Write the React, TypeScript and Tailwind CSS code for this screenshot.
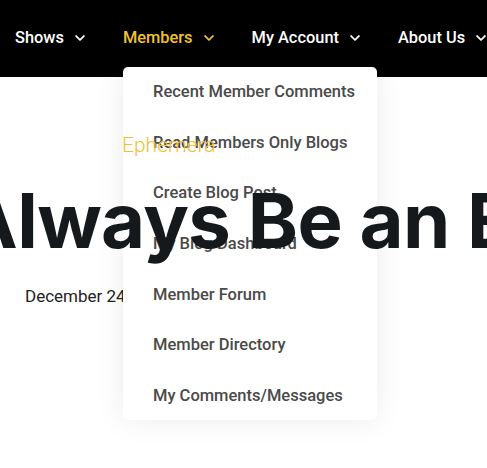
import React from "react";

const Chevron = ({ className }: { className?: string }) => (
  <svg viewBox="0 0 448 512" className={className} fill="currentColor">
    <path d="M207.029 381.476L12.686 187.132c-9.373-9.373-9.373-24.569 0-33.941l22.667-22.667c9.357-9.357 24.522-9.375 33.901-.04L224 284.505l154.745-154.021c9.379-9.335 24.544-9.317 33.901.04l22.667 22.667c9.373 9.373 9.373 24.569 0 33.941L240.971 381.476c-9.373 9.372-24.569 9.372-33.942 0z" />
  </svg>
);

const navItems = [
  { label: "Shows", active: false },
  { label: "Members", active: true },
  { label: "My Account", active: false },
  { label: "About Us", active: false },
];

const menu = [
  "Recent Member Comments",
  "Read Members Only Blogs",
  "Create Blog Post",
  "My Blog Dashboard",
  "Member Forum",
  "Member Directory",
  "My Comments/Messages",
];

export default function App() {
  return (
    <div
      className="relative w-[487px] h-[468px] overflow-hidden bg-white"
      style={{ fontFamily: "Roboto, 'Liberation Sans', sans-serif" }}
    >
      <nav className="h-[77px] bg-black flex items-center pl-[15px] gap-[38px] whitespace-nowrap">
        {navItems.map((n) => (
          <div
            key={n.label}
            className={`flex items-center gap-[11px] text-[16.4px] font-medium ${
              n.active ? "text-[#f2c12e]" : "text-white"
            }`}
          >
            <span>{n.label}</span>
            <Chevron className="w-[10px] h-[12px]" />
          </div>
        ))}
      </nav>

      <div className="absolute left-[123px] top-[67px] w-[254px] h-[353px] z-10 bg-white rounded-[5px] shadow-[0_0_30px_rgba(0,0,0,0.08)] flex flex-col">
        {menu.map((m) => (
          <div
            key={m}
            className="h-[50.67px] shrink-0 flex items-center pl-[30px] text-[16.5px] font-medium text-[#4a4a4a] whitespace-nowrap"
          >
            {m}
          </div>
        ))}
      </div>

      <div className="flex flex-col">
        <div className="relative z-20 pl-[122px] pt-[56px] text-[21px] leading-[24px] text-[#f2c12e] font-light">
          Ephemera
        </div>
        <h1
          className="relative z-20 ml-[-39px] mt-[18px] whitespace-nowrap text-[76px] leading-[90px] font-bold text-[#16191c] tracking-[-0.6px]"
          style={{ fontFamily: "Inter, sans-serif" }}
        >
          Always Be an Ephemera
        </h1>
        <div className="pl-[25px] mt-[21px] text-[17px] text-[#222] leading-[20px]">
          December 24, 2023
        </div>
      </div>
    </div>
  );
}
